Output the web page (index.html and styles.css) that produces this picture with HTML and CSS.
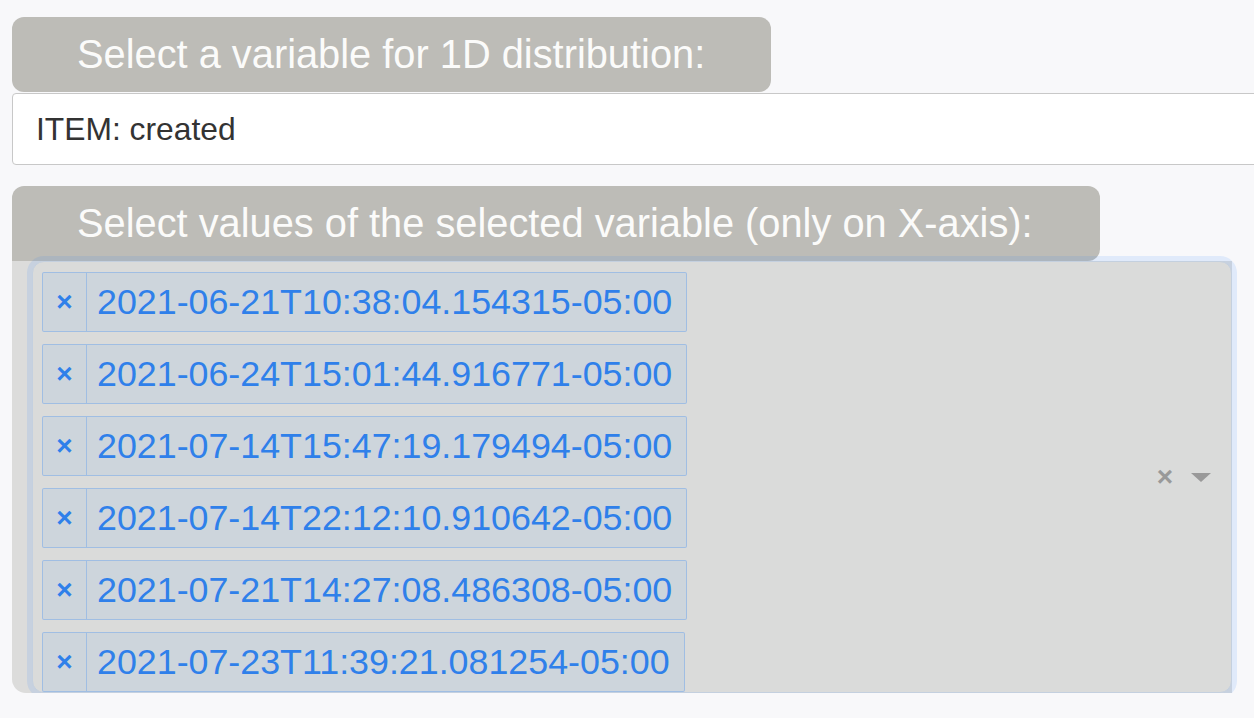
FILE: index.html
```html
<!DOCTYPE html>
<html>
<head>
<meta charset="utf-8">
<link rel="stylesheet" href="styles.css">
</head>
<body>
<div class="page">
  <div class="label label-1">Select a variable for 1D distribution:</div>
  <div class="single-select">ITEM: created</div>
  <div class="label label-2">Select values of the selected variable (only on X-axis):</div>
  <div class="multi-wrap">
    <div class="control">
      <div class="values">
        <div class="tag"><span class="tag-x">×</span><span class="tag-label">2021-06-21T10:38:04.154315-05:00</span></div>
        <div class="tag"><span class="tag-x">×</span><span class="tag-label">2021-06-24T15:01:44.916771-05:00</span></div>
        <div class="tag"><span class="tag-x">×</span><span class="tag-label">2021-07-14T15:47:19.179494-05:00</span></div>
        <div class="tag"><span class="tag-x">×</span><span class="tag-label">2021-07-14T22:12:10.910642-05:00</span></div>
        <div class="tag"><span class="tag-x">×</span><span class="tag-label">2021-07-21T14:27:08.486308-05:00</span></div>
        <div class="tag"><span class="tag-x">×</span><span class="tag-label">2021-07-23T11:39:21.081254-05:00</span></div>
      </div>
      <div class="indicators">
        <span class="clear">×</span>
        <span class="caret"></span>
      </div>
    </div>
  </div>
</div>
</body>
</html>
```

FILE: styles.css
```css
html, body {
  margin: 0;
  padding: 0;
  background: #f8f8fa;
  overflow: hidden;
}
body {
  font-family: "Liberation Sans", Arial, sans-serif;
}
.page {
  padding: 17px 0 0 12px;
}
.label {
  display: flex;
  align-items: center;
  height: 75px;
  box-sizing: border-box;
  padding-left: 65px;
  background: #bdbcb7;
  color: #fbfbfa;
  border-radius: 12px;
  font-size: 39.8px;
}
.label-1 {
  width: 759px;
}
.label-2 {
  width: 1088px;
  margin-top: 21px;
  border-radius: 12px 12px 12px 0;
}
.single-select {
  display: flex;
  align-items: center;
  box-sizing: border-box;
  width: 1270px;
  height: 72px;
  margin-top: 1px;
  padding-left: 23px;
  background: #ffffff;
  border: 1px solid #c8c8c8;
  border-radius: 4px;
  color: #333333;
  font-size: 31.8px;
}
.multi-wrap {
  width: 1220px;
  box-sizing: border-box;
  padding-left: 20px;
  background: #dcdcdb;
  border-radius: 0 0 0 14px;
}
.control {
  display: flex;
  align-items: center;
  width: 1200px;
  box-sizing: border-box;
  background: #dadbda;
  border: 1px solid #c4d0df;
  border-radius: 12px;
  box-shadow: 0 0 0 5px rgba(38, 132, 255, 0.11);
}
.values {
  flex: 1;
  display: flex;
  flex-direction: column;
  align-items: flex-start;
  gap: 12px;
  padding: 10px 0 0 9px;
}
.tag {
  display: flex;
  height: 60px;
  box-sizing: border-box;
  background: rgba(0, 126, 255, 0.06);
  border: 1px solid rgba(0, 110, 255, 0.22);
  border-radius: 2px;
  color: #2f80ea;
}
.tag-x {
  display: flex;
  align-items: center;
  justify-content: center;
  width: 43px;
  border-right: 1px solid rgba(0, 110, 255, 0.22);
  font-size: 28px;
  font-weight: bold;
}
.tag-label {
  display: flex;
  align-items: center;
  padding: 0 14px 0 10px;
  font-size: 35.8px;
}
.indicators {
  display: flex;
  align-items: center;
  gap: 18px;
  padding-right: 20px;
}
.clear {
  color: #999999;
  font-size: 28px;
  font-weight: bold;
  line-height: 1;
}
.caret {
  width: 0;
  height: 0;
  border-left: 10px solid transparent;
  border-right: 10px solid transparent;
  border-top: 9px solid #999999;
}
```
